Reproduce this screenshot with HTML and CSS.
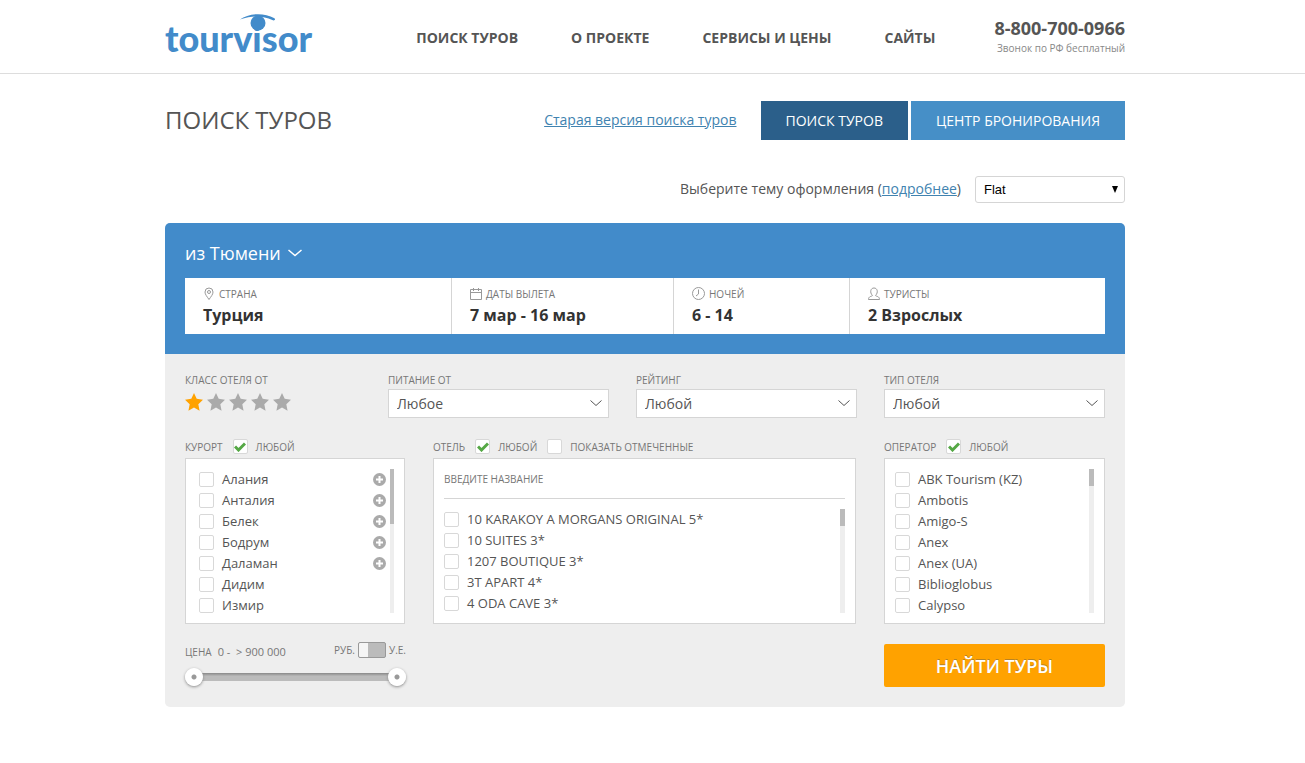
FILE: index.html
```
<!DOCTYPE html>
<html lang="ru">
<head>
<meta charset="utf-8">
<meta name="viewport" content="width=device-width, initial-scale=1">
<title>Поиск туров</title>
<link rel="stylesheet" href="styles.css">
</head>
<body>
<header class="site-header">
  <div class="container header-row">
    <a class="logo" href="#"><span>tourvisor</span>
      <svg class="logo-eye" viewBox="0 0 36 17" width="36" height="17" aria-hidden="true"><path d="M0 5.500C8-.5 23-2.200 34.500 4.200C36 6 34 7 32.300 6C23 1.500 12 1.200 0 5.500Z"/><circle cx="18" cy="9" r="7.500"/></svg>
    </a>
    <nav class="main-nav">
      <a href="#">ПОИСК ТУРОВ</a>
      <a href="#">О ПРОЕКТЕ</a>
      <a href="#">СЕРВИСЫ И ЦЕНЫ</a>
      <a href="#">САЙТЫ</a>
    </nav>
    <div class="phone">
      <a class="phone-number" href="tel:88007000966">8-800-700-0966</a>
      <span class="phone-note">Звонок по РФ бесплатный</span>
    </div>
  </div>
</header>

<main class="page">
  <div class="container">
    <div class="title-row">
      <h1>ПОИСК ТУРОВ</h1>
      <a class="link" href="#">Старая версия поиска туров</a>
      <div class="tabs">
        <a class="tab tab-active" href="#">ПОИСК ТУРОВ</a>
        <a class="tab" href="#">ЦЕНТР БРОНИРОВАНИЯ</a>
      </div>
    </div>

    <div class="theme-row">
      <p><label for="theme">Выберите тему оформления</label> (<a class="link" href="#">подробнее</a>)</p>
      <select id="theme" class="theme-select"><option>Flat</option></select>
    </div>

    <form class="search">
      <div class="search-top">
        <button type="button" class="city">из Тюмени
          <svg width="14" height="8" viewBox="0 0 14 8" aria-hidden="true"><path d="M.5 1L7 6.500L13.500 1" fill="none" stroke="currentColor" stroke-width="1.500"/></svg>
        </button>
        <div class="fields">
          <button type="button" class="field">
            <span class="caption"><svg width="12" height="14" viewBox="0 0 12 14"><path d="M6 12.500C4 9.500 2 7.500 2 5A4 4 0 0 1 10 5C10 7.500 8 9.500 6 12.500Z"/><circle cx="6" cy="5" r="1.500"/></svg>СТРАНА</span>
            <span class="value">Турция</span>
          </button>
          <button type="button" class="field">
            <span class="caption"><svg width="12" height="14" viewBox="0 0 12 14"><path d="M.5 2.500H11.500V12.500H.5ZM.5 5.500H11.500M3.500 1V4M8.500 1V4"/></svg>ДАТЫ ВЫЛЕТА</span>
            <span class="value">7 мар - 16 мар</span>
          </button>
          <button type="button" class="field">
            <span class="caption"><svg width="13" height="14" viewBox="0 0 13 14"><circle cx="6.500" cy="6.500" r="6"/><path d="M6.500 2.500V7L4 9"/></svg>НОЧЕЙ</span>
            <span class="value">6 - 14</span>
          </button>
          <button type="button" class="field">
            <span class="caption"><svg width="12" height="14" viewBox="0 0 12 14"><path d="M4.500 8.500C1.500 5.500 2.500 1 6 1S10.500 5.500 7.500 8.500C8 9.500 11.500 9 11.500 12.500H.5C.5 9 4 9.500 4.500 8.500Z"/></svg>ТУРИСТЫ</span>
            <span class="value">2 Взрослых</span>
          </button>
        </div>
      </div>

      <div class="filters">
        <div class="filter-row">
          <fieldset class="stars">
            <legend class="caption">КЛАСС ОТЕЛЯ ОТ</legend>
            <div class="stars-list">
              <input type="radio" name="stars" aria-label="1 звезда" class="star" checked>
              <input type="radio" name="stars" aria-label="2 звезды" class="star">
              <input type="radio" name="stars" aria-label="3 звезды" class="star">
              <input type="radio" name="stars" aria-label="4 звезды" class="star">
              <input type="radio" name="stars" aria-label="5 звёзд" class="star">
            </div>
          </fieldset>
          <div class="filter">
            <label class="caption" for="meal">ПИТАНИЕ ОТ</label>
            <select id="meal" class="select"><option>Любое</option></select>
          </div>
          <div class="filter">
            <label class="caption" for="rating">РЕЙТИНГ</label>
            <select id="rating" class="select"><option>Любой</option></select>
          </div>
          <div class="filter">
            <label class="caption" for="type">ТИП ОТЕЛЯ</label>
            <select id="type" class="select"><option>Любой</option></select>
          </div>
        </div>

        <div class="lists-row">
          <section class="list-block">
            <div class="list-head caption"><span>КУРОРТ</span><label><input type="checkbox" class="check" checked>ЛЮБОЙ</label></div>
            <div class="box box-inset">
              <div class="scroll">
                <ul class="options">
                  <li><label><input type="checkbox" class="check">Алания</label><button type="button" class="plus" aria-label="Раскрыть"></button></li>
                  <li><label><input type="checkbox" class="check">Анталия</label><button type="button" class="plus" aria-label="Раскрыть"></button></li>
                  <li><label><input type="checkbox" class="check">Белек</label><button type="button" class="plus" aria-label="Раскрыть"></button></li>
                  <li><label><input type="checkbox" class="check">Бодрум</label><button type="button" class="plus" aria-label="Раскрыть"></button></li>
                  <li><label><input type="checkbox" class="check">Даламан</label><button type="button" class="plus" aria-label="Раскрыть"></button></li>
                  <li><label><input type="checkbox" class="check">Дидим</label></li>
                  <li><label><input type="checkbox" class="check">Измир</label></li>
                </ul>
                <div class="bar bar-thin"><div class="thumb thumb-long"></div></div>
              </div>
            </div>
          </section>

          <section class="list-block">
            <div class="list-head caption"><span>ОТЕЛЬ</span><label><input type="checkbox" class="check" checked>ЛЮБОЙ</label><label><input type="checkbox" class="check">ПОКАЗАТЬ ОТМЕЧЕННЫЕ</label></div>
            <div class="box">
              <input type="text" class="hotel-name" placeholder="ВВЕДИТЕ НАЗВАНИЕ" aria-label="Название отеля">
              <div class="scroll scroll-short">
                <ul class="options">
                  <li><label><input type="checkbox" class="check">10 KARAKOY A MORGANS ORIGINAL 5*</label></li>
                  <li><label><input type="checkbox" class="check">10 SUITES 3*</label></li>
                  <li><label><input type="checkbox" class="check">1207 BOUTIQUE 3*</label></li>
                  <li><label><input type="checkbox" class="check">3T APART 4*</label></li>
                  <li><label><input type="checkbox" class="check">4 ODA CAVE 3*</label></li>
                </ul>
                <div class="bar"><div class="thumb"></div></div>
              </div>
            </div>
          </section>

          <section class="list-block">
            <div class="list-head caption"><span>ОПЕРАТОР</span><label><input type="checkbox" class="check" checked>ЛЮБОЙ</label></div>
            <div class="box">
              <div class="scroll">
                <ul class="options">
                  <li><label><input type="checkbox" class="check">ABK Tourism (KZ)</label></li>
                  <li><label><input type="checkbox" class="check">Ambotis</label></li>
                  <li><label><input type="checkbox" class="check">Amigo-S</label></li>
                  <li><label><input type="checkbox" class="check">Anex</label></li>
                  <li><label><input type="checkbox" class="check">Anex (UA)</label></li>
                  <li><label><input type="checkbox" class="check">Biblioglobus</label></li>
                  <li><label><input type="checkbox" class="check">Calypso</label></li>
                </ul>
                <div class="bar"><div class="thumb"></div></div>
              </div>
            </div>
          </section>
        </div>

        <div class="bottom-row">
          <div class="price">
            <div class="price-head">
              <span class="price-text"><span>ЦЕНА</span><output>0 -&nbsp; &gt; 900 000</output></span>
              <label class="currency"><span>РУБ.</span><input type="checkbox" class="switch"><span>У.Е.</span></label>
            </div>
            <div class="range">
              <input type="range" min="0" max="100" value="0" aria-label="Цена от">
              <input type="range" min="0" max="100" value="100" aria-label="Цена до">
            </div>
          </div>
          <button type="button" class="submit">НАЙТИ ТУРЫ</button>
        </div>
      </div>
    </form>
  </div>
</main>
</body>
</html>
```
FILE: styles.css
```
* { box-sizing: border-box; }

body {
  margin: 0;
  background: #fff;
  color: #555;
  font: 14px/20px "Open Sans", "Noto Sans", sans-serif;
}

button, input, select { font: inherit; color: inherit; margin: 0; }
button { border: 0; padding: 0; background: none; text-align: left; cursor: pointer; }
a { color: inherit; text-decoration: none; }

.link { color: #4183b0; text-decoration: underline; }

.container { max-width: 960px; margin: 0 auto; }

/* Header */
.site-header { border-bottom: 1px solid #ddd; padding-right: 15px; }
.header-row { display: flex; align-items: center; height: 73px; }

.logo {
  position: relative;
  padding-top: 2px;
  color: #428bca;
  font-size: 36px;
  line-height: 48px;
  font-weight: 900;
  font-family: Lato, "Open Sans", sans-serif;
}
.logo-eye { position: absolute; left: 75px; top: 2px; fill: #428bca; }

.main-nav { display: flex; gap: 53px; margin-left: auto; margin-right: 59px; padding-top: 3px; font-weight: 700; }
.phone { display: flex; flex-direction: column; align-items: flex-end; }
.phone-number { font-size: 18px; line-height: 22px; font-weight: 700; }
.phone-note { font-size: 10px; line-height: 18px; color: #888; }

/* Title and theme */
.page { padding: 27px 15px 56px 0; }
.title-row { display: flex; align-items: center; }
h1 { margin: 0 auto 0 0; padding-bottom: 2px; font-size: 24px; line-height: 37px; font-weight: 400; }
.title-row > .link { padding-bottom: 2px; }
.tabs { display: flex; gap: 3px; margin-left: 24px; }
.tab { padding: 0 25px; line-height: 39px; color: #fff; background: #468fc7; }
.tab-active { background: #2b5f8a; }

.theme-row { display: flex; align-items: center; justify-content: flex-end; gap: 14px; margin: 36px 0 20px; }
.theme-row p { margin: 0; padding-bottom: 2px; }
.theme-select, .select {
  appearance: none;
  border: 1px solid #d5d5d5;
  background: #fff no-repeat;
}
.theme-select {
  width: 150px;
  height: 27px;
  padding: 0 8px;
  border-radius: 3px;
  color: #000;
  font: 13px/20px "Liberation Sans", sans-serif;
  background-image: url("data:image/svg+xml,%3Csvg xmlns='http://www.w3.org/2000/svg' width='6' height='7'%3E%3Cpath d='M0 0H6L3 7Z'/%3E%3C/svg%3E");
  background-position: right 6px center;
}

/* Search panel */
.search { border-radius: 5px; overflow: hidden; background: #eee; }
.search-top { padding: 19px 20px 20px; background: #428bca; }
.city { display: flex; align-items: center; gap: 7px; margin-bottom: 14px; color: #fff; font-size: 18px; line-height: 22px; }
.fields { display: grid; grid-template-columns: 267fr 222fr 176fr 255fr; background: #fff; }
.field { height: 56px; padding: 8px 18px 6px; border-right: 1px solid #d5d5d5; }
.field:last-child { border-right: 0; }
.field .caption { display: flex; align-items: center; gap: 4px; line-height: 16px; }
.field svg { fill: none; stroke: #999; stroke-width: 1; }
.value { display: block; font-size: 16px; line-height: 26px; font-weight: 700; color: #333; }

.caption { font-size: 10px; line-height: 12px; color: #777; }

/* Filters */
.filters { padding: 20px; }
.filter-row { display: grid; grid-template-columns: 1fr 221px 221px 221px; gap: 27px; }
.filter { display: flex; flex-direction: column; gap: 3px; }
.select {
  width: 100%;
  height: 29px;
  padding: 0 8px;
  background-image: url("data:image/svg+xml,%3Csvg xmlns='http://www.w3.org/2000/svg' width='12' height='7'%3E%3Cpath d='M.5 .5L6 5.500L11.500 .5' fill='none' stroke='%23555'/%3E%3C/svg%3E");
  background-position: right 6px center;
}

.stars { border: 0; margin: 0; padding: 0; min-width: 0; }
.stars legend { padding: 0; }
.stars-list { display: flex; gap: 4px; padding-top: 7px; }
.star {
  appearance: none;
  width: 18px;
  height: 18px;
  background: #aaa;
  clip-path: polygon(50% 0, 65% 32%, 100% 37%, 74% 62%, 81% 98%, 50% 81%, 19% 98%, 26% 62%, 0 37%, 35% 32%);
}
.star:checked { background: #ffa200; }

.lists-row { display: grid; grid-template-columns: 220px 1fr 221px; gap: 28px; margin: 21px 0 18px; }
.list-head { display: flex; align-items: center; gap: 10px; height: 15px; margin-bottom: 4px; }
.list-head label { display: flex; align-items: center; gap: 8px; }
.check {
  appearance: none;
  flex: none;
  width: 15px;
  height: 15px;
  border: 1px solid #d8d8d8;
  border-radius: 2px;
  background: #fff no-repeat center;
}
.check:checked {
  background-image: url("data:image/svg+xml,%3Csvg xmlns='http://www.w3.org/2000/svg' width='12' height='10'%3E%3Cpath d='M1 4.500L4.500 8L11 1.500' fill='none' stroke='%2355a845' stroke-width='3'/%3E%3C/svg%3E");
}

.box { border: 1px solid #d5d5d5; background: #fff; padding: 10px; }
.box-inset { padding-left: 13px; }
.scroll { display: flex; justify-content: space-between; height: 144px; overflow: hidden; }
.scroll-short { height: 104px; }
.options { flex: 1; list-style: none; margin: 0; padding: 0; font-size: 13px; line-height: 21px; }
.options li { display: flex; align-items: center; justify-content: space-between; height: 21px; padding-right: 4px; }
.options label { display: flex; align-items: center; gap: 8px; }
.bar { width: 5px; background: #eee; }
.bar-thin { width: 4px; }
.thumb { height: 17px; background: #bbb; }
.thumb-long { height: 55px; }

.plus {
  width: 13px;
  height: 13px;
  background: url("data:image/svg+xml,%3Csvg xmlns='http://www.w3.org/2000/svg' width='13' height='13'%3E%3Ccircle cx='6.500' cy='6.500' r='6.500' fill='%23aaa'/%3E%3Cpath d='M3 6.500H10M6.500 3V10' stroke='%23fff' stroke-width='2'/%3E%3C/svg%3E") center no-repeat;
}

.hotel-name {
  display: block;
  width: 100%;
  height: 30px;
  margin-bottom: 10px;
  padding: 0 0 9px;
  border: 0;
  border-bottom: 1px solid #d5d5d5;
  background: none;
  font-size: 10px;
}
.hotel-name::placeholder { color: #777; opacity: 1; }

/* Price and submit */
.bottom-row { display: flex; justify-content: space-between; align-items: flex-start; }
.price { width: 221px; }
.price-head { display: flex; justify-content: space-between; font-size: 10px; line-height: 16px; color: #777; }
.price-text { display: flex; gap: 6px; padding-top: 2px; }
.price-text output { font-size: 11px; }
.currency { display: flex; gap: 3px; }
.switch {
  appearance: none;
  width: 28px;
  height: 16px;
  border: 1px solid #999;
  border-radius: 2px;
  background: linear-gradient(#f5f5f5, #f5f5f5) left / 9px 100% no-repeat, #bbb;
}
.range {
  position: relative;
  height: 18px;
  margin-top: 8px;
  background: linear-gradient(#888, #bbb 40%) center / calc(100% - 20px) 8px no-repeat;
}
.range input {
  position: absolute;
  inset: 0;
  width: 100%;
  height: 18px;
  appearance: none;
  background: none;
  pointer-events: none;
}
.range input::-webkit-slider-thumb {
  appearance: none;
  width: 18px;
  height: 18px;
  border-radius: 50%;
  background: radial-gradient(circle, #999 0 2px, #fff 3px);
  box-shadow: 0 1px 3px #888;
  pointer-events: auto;
}
.submit {
  width: 221px;
  height: 43px;
  margin-top: 2px;
  border-radius: 2px;
  background: #ffa200;
  color: #fff;
  font-size: 18px;
  font-weight: 600;
  text-align: center;
  text-shadow: 0 -1px 0 #b98324;
}
```
